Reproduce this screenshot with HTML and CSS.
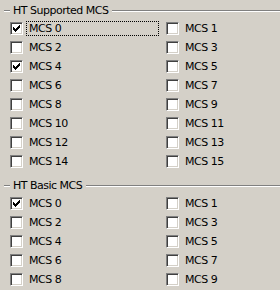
FILE: index.html
```html
<!DOCTYPE html>
<html>
<head>
<meta charset="utf-8">
<link rel="stylesheet" href="styles.css">
</head>
<body>
<div class="panel">
  <section class="group">
    <div class="group-head"><span class="dash"></span><span class="legend">HT Supported MCS</span><span class="rule"></span></div>
    <div class="grid">
      <label class="item"><span class="box on"><svg viewBox="0 0 13 13" width="13" height="13"><path d="M3 5h1v3H3zM4 6h1v3H4zM5 7h1v3H5zM6 6h1v3H6zM7 5h1v3H7zM8 4h1v3H8zM9 3h1v3H9z"/></svg></span><span class="text focus">MCS 0</span></label>
      <label class="item"><span class="box"></span><span class="text">MCS 1</span></label>
      <label class="item"><span class="box"></span><span class="text">MCS 2</span></label>
      <label class="item"><span class="box"></span><span class="text">MCS 3</span></label>
      <label class="item"><span class="box on"><svg viewBox="0 0 13 13" width="13" height="13"><path d="M3 5h1v3H3zM4 6h1v3H4zM5 7h1v3H5zM6 6h1v3H6zM7 5h1v3H7zM8 4h1v3H8zM9 3h1v3H9z"/></svg></span><span class="text">MCS 4</span></label>
      <label class="item"><span class="box"></span><span class="text">MCS 5</span></label>
      <label class="item"><span class="box"></span><span class="text">MCS 6</span></label>
      <label class="item"><span class="box"></span><span class="text">MCS 7</span></label>
      <label class="item"><span class="box"></span><span class="text">MCS 8</span></label>
      <label class="item"><span class="box"></span><span class="text">MCS 9</span></label>
      <label class="item"><span class="box"></span><span class="text">MCS 10</span></label>
      <label class="item"><span class="box"></span><span class="text">MCS 11</span></label>
      <label class="item"><span class="box"></span><span class="text">MCS 12</span></label>
      <label class="item"><span class="box"></span><span class="text">MCS 13</span></label>
      <label class="item"><span class="box"></span><span class="text">MCS 14</span></label>
      <label class="item"><span class="box"></span><span class="text">MCS 15</span></label>
    </div>
  </section>
  <section class="group group-second">
    <div class="group-head"><span class="dash"></span><span class="legend">HT Basic MCS</span><span class="rule"></span></div>
    <div class="grid">
      <label class="item"><span class="box on"><svg viewBox="0 0 13 13" width="13" height="13"><path d="M3 5h1v3H3zM4 6h1v3H4zM5 7h1v3H5zM6 6h1v3H6zM7 5h1v3H7zM8 4h1v3H8zM9 3h1v3H9z"/></svg></span><span class="text">MCS 0</span></label>
      <label class="item"><span class="box"></span><span class="text">MCS 1</span></label>
      <label class="item"><span class="box"></span><span class="text">MCS 2</span></label>
      <label class="item"><span class="box"></span><span class="text">MCS 3</span></label>
      <label class="item"><span class="box"></span><span class="text">MCS 4</span></label>
      <label class="item"><span class="box"></span><span class="text">MCS 5</span></label>
      <label class="item"><span class="box"></span><span class="text">MCS 6</span></label>
      <label class="item"><span class="box"></span><span class="text">MCS 7</span></label>
      <label class="item"><span class="box"></span><span class="text">MCS 8</span></label>
      <label class="item"><span class="box"></span><span class="text">MCS 9</span></label>
    </div>
  </section>
</div>
</body>
</html>
```
FILE: styles.css
```css
html, body {
  margin: 0;
  padding: 0;
  background: #d4d0c8;
  overflow: hidden;
}
body {
  width: 280px;
  height: 290px;
  font-family: "DejaVu Sans", "Liberation Sans", sans-serif;
  font-size: 11px;
  letter-spacing: -0.5px;
  color: #000;
}
.panel {
  padding-left: 3px;
}
.group-head {
  display: flex;
  height: 19px;
  align-items: flex-start;
}
.dash, .rule {
  margin-top: 10px;
  border-top: 1px solid #808080;
  border-bottom: 1px solid #ffffff;
  height: 0;
}
.dash {
  width: 6px;
  margin-left: 1px;
}
.rule {
  flex: 1;
}
.legend {
  padding: 1px 4px 0 3px;
  line-height: 19px;
  white-space: nowrap;
}
.grid {
  display: grid;
  grid-template-columns: 156px 1fr;
  grid-auto-rows: 19px;
  padding-left: 7px;
}
.group-second {
  margin-top: 4px;
}
.item {
  display: flex;
  align-items: center;
}
.box {
  width: 13px;
  height: 13px;
  box-sizing: border-box;
  background: #fff;
  border-top: 1px solid #808080;
  border-left: 1px solid #808080;
  border-bottom: 1px solid #fff;
  border-right: 1px solid #fff;
  box-shadow: inset 1px 1px 0 #404040, inset -1px -1px 0 #d4d0c8;
  position: relative;
  flex: none;
}
.box svg {
  position: absolute;
  left: -1px;
  top: -1px;
  fill: #000;
  shape-rendering: crispEdges;
}
.text {
  margin-left: 3px;
  padding: 0 2px;
  border: 1px dotted transparent;
  line-height: 13px;
  white-space: nowrap;
}
.text.focus {
  border-color: #000;
  flex: 1;
  margin-right: 7px;
}
```
